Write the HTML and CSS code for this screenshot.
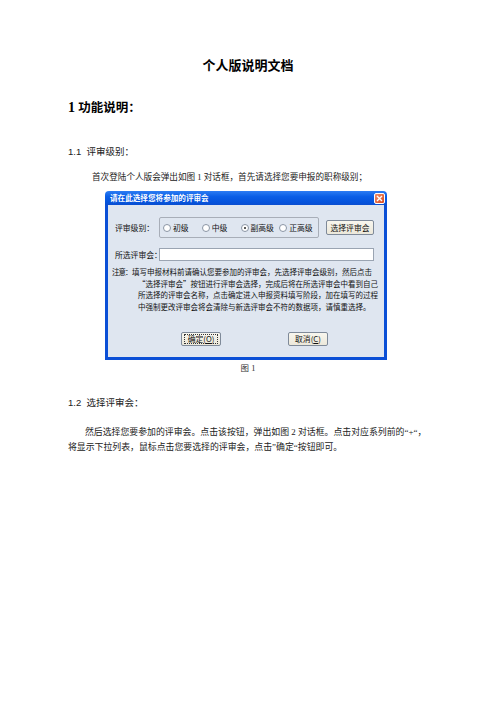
FILE: index.html
```html
<!DOCTYPE html>
<html lang="zh-CN">
<head>
  <meta charset="UTF-8" />
  <title>个人版说明文档</title>
  <link rel="stylesheet" href="styles.css">
</head>
<body>
  <div class="doc">
    <h1>个人版说明文档</h1>

    <h2><span class="num">1</span> 功能说明：</h2>

    <h3>1.1&nbsp; 评审级别：</h3>
    <p class="para first">首次登陆个人版会弹出如图 1 对话框，首先请选择您要申报的职称级别；</p>

    <!-- 对话框截图 -->
    <div class="dialog">
      <div class="titlebar">
        <span class="title">请在此选择您将参加的评审会</span>
        <span class="close">
          <svg width="7" height="7" viewBox="0 0 7 7"><path d="M1 1L6 6M6 1L1 6" stroke="#fff" stroke-width="1.4"/></svg>
        </span>
      </div>
      <div class="dialog-body">
        <div class="row">
          <span class="label">评审级别：</span>
          <div class="groupbox">
            <span class="radio"><i></i>初级</span>
            <span class="radio"><i></i>中级</span>
            <span class="radio checked"><i></i>副高级</span>
            <span class="radio"><i></i>正高级</span>
          </div>
          <span class="btn pick">选择评审会</span>
        </div>
        <div class="row row2">
          <span class="label">所选评审会：</span>
          <div class="input"></div>
        </div>
        <div class="notice">
          <span class="notice-label">注意：</span>
          <div class="notice-text">
            <div class="line lead">填写申报材料前请确认您要参加的评审会，先选择评审会级别，然后点击</div>
            <div class="line">“选择评审会”按钮进行评审会选择，完成后将在所选评审会中看到自己</div>
            <div class="line">所选择的评审会名称，点击确定进入申报资料填写阶段，加在填写的过程</div>
            <div class="line">中强制更改评审会将会清除与新选评审会不符的数据项，请慎重选择。</div>
          </div>
        </div>
        <div class="actions">
          <span class="btn ok"><span class="focus">确定(<u>O</u>)</span></span>
          <span class="btn">取消(<u>C</u>)</span>
        </div>
      </div>
    </div>
    <div class="caption">图 1</div>

    <h3 class="second">1.2&nbsp; 选择评审会：</h3>
    <p class="para last">然后选择您要参加的评审会。点击该按钮，弹出如图 2 对话框。点击对应系列前的“+“，<br>将显示下拉列表，鼠标点击您要选择的评审会，点击”确定“按钮即可。</p>
  </div>
</body>
</html>
```

FILE: styles.css
```css
body {
  margin: 0;
  background: #fff;
  color: #000;
  font-family: "Liberation Serif", "Noto Sans CJK SC", serif;
}

.doc {
  width: 360px;
  padding: 0 68px;
}

h1 {
  margin: 57px 0 0;
  font-size: 13px;
  line-height: 16px;
  font-weight: bold;
  text-align: center;
  font-family: "Noto Sans CJK SC", sans-serif;
}

h2 {
  margin: 27px 0 0;
  font-size: 12.5px;
  line-height: 16px;
  font-weight: bold;
  font-family: "Liberation Serif", "Noto Sans CJK SC", serif;
}

h2 .num {
  font-size: 14px;
}

h3 {
  margin: 30px 0 0;
  font-size: 9.5px;
  line-height: 12px;
  font-weight: normal;
  font-family: "Liberation Sans", "Noto Sans CJK SC", sans-serif;
  color: #222;
}

h3.second {
  margin-top: 23px;
}

.para {
  margin: 13px 0 0;
  font-size: 8.6px;
  line-height: 12px;
  color: #222;
  white-space: nowrap;
}

.para.first {
  text-indent: 24px;
}

.para.last {
  margin-top: 16px;
  font-size: 8.9px;
  line-height: 15px;
  text-indent: 17px;
}

/* 对话框 */
.dialog {
  width: 282px;
  margin: 8px 0 0 37px;
  font-family: "Noto Sans CJK SC", sans-serif;
  font-size: 7.8px;
  color: #111;
}

.titlebar {
  height: 14px;
  display: flex;
  align-items: center;
  justify-content: space-between;
  padding: 0 2px 0 5px;
  border-radius: 4px 4px 0 0;
  background: linear-gradient(#2c7cf3, #0a5ee6 40%, #0553dc 80%, #0a4ed0);
}

.title {
  color: #fff;
  font-weight: bold;
  font-size: 7.6px;
  line-height: 14px;
}

.close {
  width: 11px;
  height: 11px;
  border: 1px solid #fff;
  border-radius: 2px;
  background: linear-gradient(135deg, #f0906c, #d9481f);
  display: flex;
  align-items: center;
  justify-content: center;
  box-sizing: border-box;
}

.dialog-body {
  background: #dfe6f0;
  border: 3px solid #0b4fd6;
  border-top: 0;
  padding: 12px 10px 11px 7px;
}

.row {
  display: flex;
  align-items: center;
}

.label {
  width: 44px;
  white-space: nowrap;
}

.groupbox {
  width: 155px;
  height: 19px;
  border: 1px solid #a8aeb8;
  border-radius: 2px;
  display: flex;
  align-items: center;
  padding-left: 3px;
  overflow: hidden;
}

.radio {
  width: 39.5px;
  display: flex;
  align-items: center;
  white-space: nowrap;
}

.radio i {
  width: 6px;
  height: 6px;
  border: 1px solid #8a95a4;
  border-radius: 50%;
  background: #fff;
  margin-right: 2px;
  display: flex;
  align-items: center;
  justify-content: center;
  flex: none;
}

.radio.checked i::after {
  content: "";
  width: 2px;
  height: 2px;
  border-radius: 50%;
  background: #222;
}

.btn {
  display: inline-flex;
  align-items: center;
  justify-content: center;
  height: 12px;
  border: 1px solid #7f8a99;
  border-radius: 2px;
  background: linear-gradient(#f8f6ee, #ece8da);
  white-space: nowrap;
  box-sizing: content-box;
}

.btn.pick {
  width: 46px;
  height: 13px;
  margin-left: 7px;
}

.row2 {
  margin-top: 10px;
}

.input {
  width: 214px;
  height: 11px;
  background: #fff;
  border: 1px solid #9aa4b2;
}

.notice {
  display: flex;
  margin-top: 5px;
  margin-left: -3px;
  line-height: 11.7px;
  font-size: 7.5px;
}

.notice-label {
  width: 26px;
  flex: none;
  letter-spacing: -1px;
}

.notice-text .line {
  white-space: nowrap;
}

.notice-text .line.lead {
  margin-left: -6px;
}

.actions {
  display: flex;
  margin-top: 19px;
  padding-left: 66px;
  gap: 67px;
}

.actions .btn {
  width: 38px;
}

.btn.ok .focus {
  border: 1px dotted #333;
  padding: 0 3px;
  line-height: 8px;
}

.btn u {
  text-decoration: underline;
}

.caption {
  margin-top: 2px;
  text-align: center;
  font-size: 8.5px;
  line-height: 12px;
  color: #333;
}
```
